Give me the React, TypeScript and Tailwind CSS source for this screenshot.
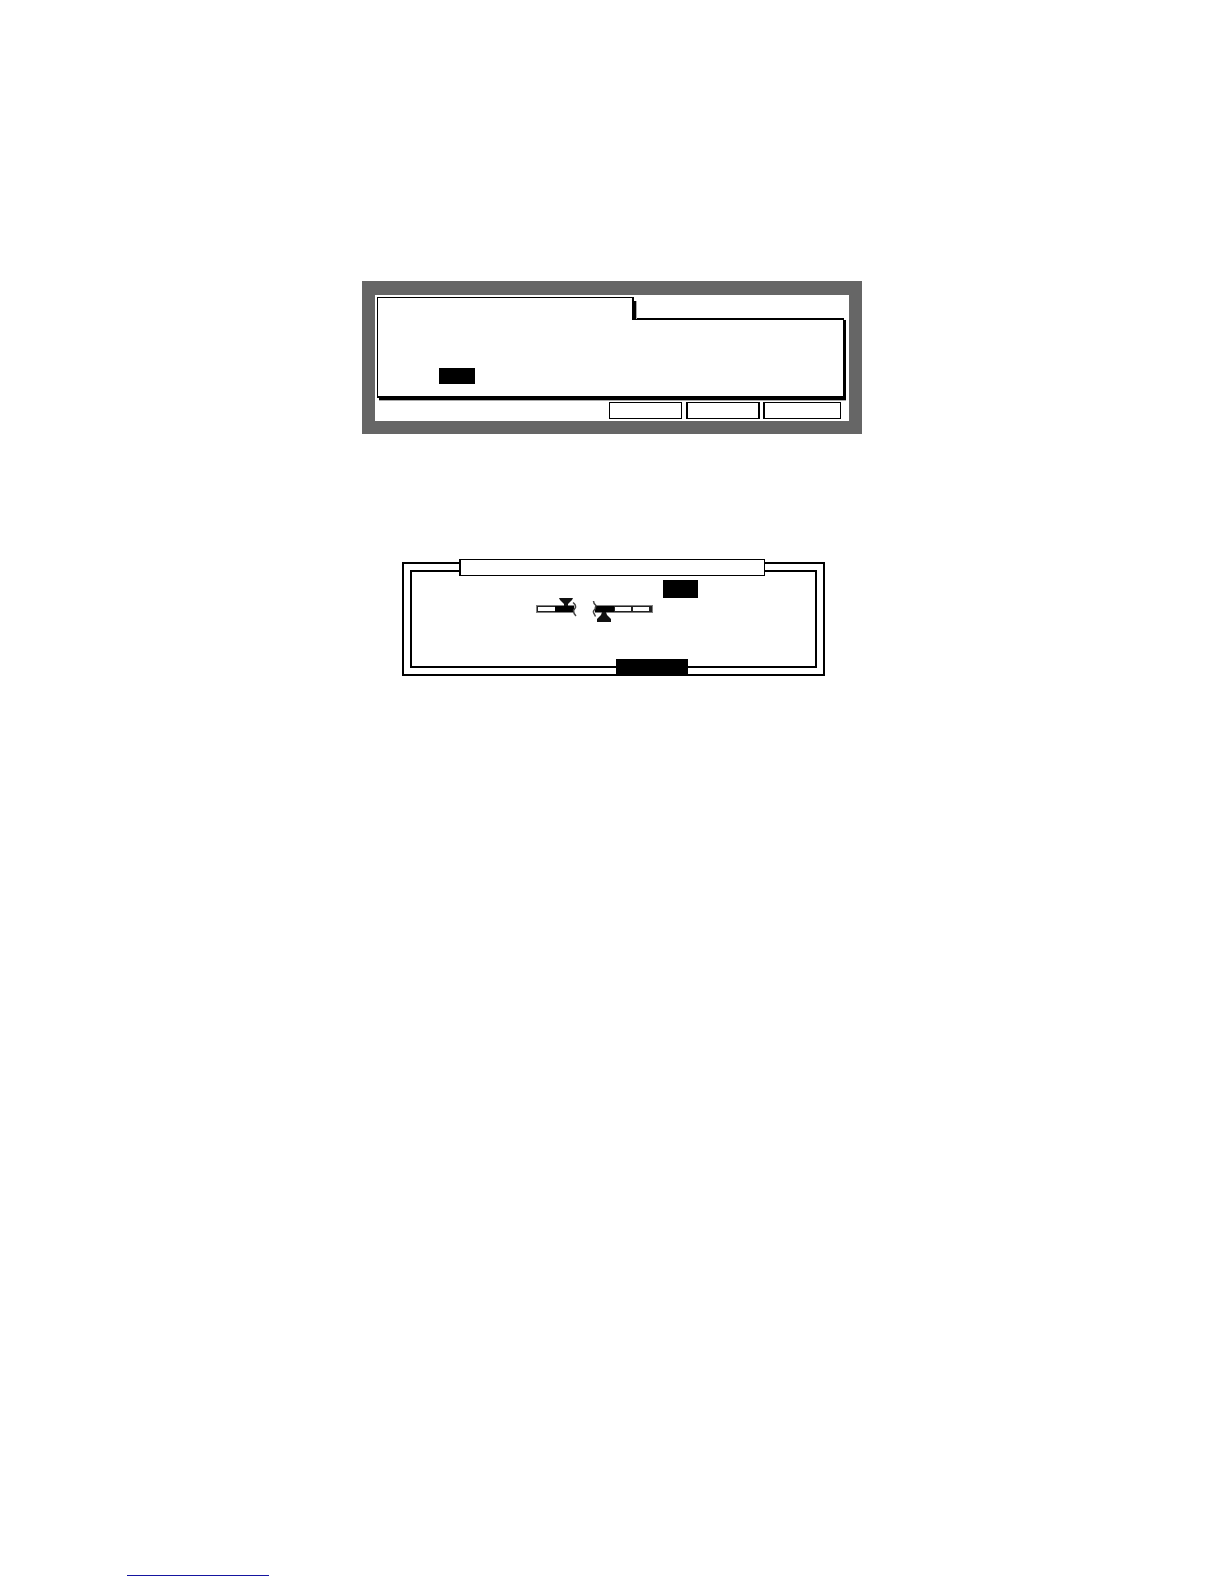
import type { ReactNode } from 'react';

const softKeys = [
  { label: 'Soft key 4', className: 'w-[73px] border' },
  { label: 'Soft key 5', className: 'ml-1 w-[74px] border-x-2 border-y' },
  { label: 'Soft key 6', className: 'ml-[3px] w-[78px] border border-l-2' },
];

function Screen({ children }: { children: ReactNode }) {
  return (
    <section className="w-full max-w-[500px] border-[13px] border-t-[14px] border-[#666666] bg-white pt-0.5 pb-0.5">
      {children}
    </section>
  );
}

function FolderPage() {
  return (
    <Screen>
      <div className="pl-0.5 pr-[5px]">
        <div className="flex">
          <div className="relative z-10 -mb-0.5 h-[23px] w-[257px] border-t border-r-2 border-l border-black bg-white">
            <div className="absolute top-[3px] left-full ml-0.5 h-[18px] w-[3px] border-r border-[#aaaaaa] bg-black" />
          </div>
        </div>
        <div className="h-20 border border-y-2 border-black bg-white pt-12 pl-[61px] shadow-[2px_2px_0_#000,2px_3px_0_#aaa]">
          <input
            aria-label="Value"
            className="block h-4 w-9 bg-black text-white outline-none"
          />
        </div>
      </div>
      <div className="mt-1 flex justify-end pr-2">
        {softKeys.map((key) => (
          <button
            key={key.label}
            aria-label={key.label}
            className={`h-[17px] border-black bg-white ${key.className}`}
          />
        ))}
      </div>
    </Screen>
  );
}

function RangeStart() {
  return (
    <svg width="43" height="28" viewBox="0 0 43 28" aria-hidden="true">
      <rect x="1" y="9" width="38" height="8" fill="#808080" />
      <rect x="2" y="10" width="37" height="6" fill="#222" />
      <rect x="3" y="11" width="17" height="4" fill="#fff" />
      <rect x="20" y="10" width="19" height="6" fill="#000" />
      <path d="M24 2h14l-1 2-4 4v2h-4V8l-4-4z" fill="#111" />
      <path d="M38 6.500q3 2 2.500 5l-2 3q0 3 2.500 5.500" fill="none" stroke="#444" strokeWidth="1.500" />
    </svg>
  );
}

function RangeEnd() {
  return (
    <svg width="64" height="28" viewBox="0 0 64 28" aria-hidden="true">
      <rect x="5" y="9" width="58" height="8" fill="#808080" />
      <rect x="6" y="10" width="56" height="6" fill="#222" />
      <rect x="5" y="10" width="19" height="6" fill="#000" />
      <rect x="25" y="11" width="16" height="4" fill="#fff" />
      <rect x="43" y="11" width="16" height="4" fill="#fff" />
      <path d="M12 16h4l1 3 4 4v3H7v-3l4-4z" fill="#111" />
      <path d="M3.500 5q0 2.500 2.500 4.500l-1 3.500q-2 2-1.500 3.500l2 4" fill="none" stroke="#444" strokeWidth="1.500" />
    </svg>
  );
}

function RangeDialog() {
  return (
    <section className="relative w-full max-w-[423px] border-2 border-black bg-white p-1.5">
      <div className="h-[98px] border-2 border-black">
        <div className="flex pt-2 pl-[251px]">
          <input
            aria-label="Amount"
            className="block h-[18px] w-[35px] bg-black text-white outline-none"
          />
        </div>
        <div className="-mt-0.5 flex gap-3 pl-[123px]">
          <RangeStart />
          <RangeEnd />
        </div>
      </div>
      <h2 className="absolute -top-[5px] left-[55px] h-[17px] w-[306px] border border-l-2 border-black bg-white" />
      <button
        aria-label="Close"
        className="absolute -bottom-0.5 left-[212px] h-[17px] w-[72px] bg-black"
      />
    </section>
  );
}

export default function App() {
  return (
    <main className="flex min-h-screen flex-col items-center bg-white pt-[281px] pb-2 font-['Liberation_Sans',sans-serif] text-xs text-black">
      <FolderPage />
      <div className="mt-32 flex w-full justify-center pl-[3px]">
        <RangeDialog />
      </div>
      <footer className="mt-auto w-full pl-[127px]">
        <a
          href="#"
          aria-label="Website"
          className="block h-4 w-[142px] border-b border-[#1515a0]"
        />
      </footer>
    </main>
  );
}
